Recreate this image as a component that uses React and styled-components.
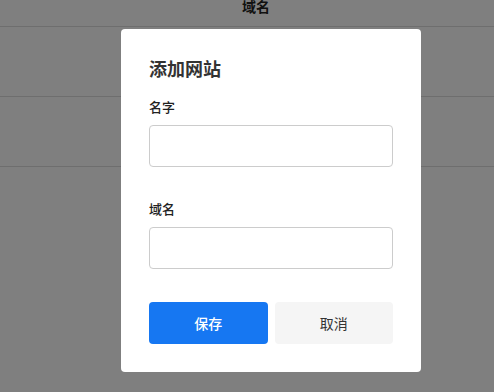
import React from 'react';
import styled, { createGlobalStyle } from 'styled-components';

const GlobalStyle = createGlobalStyle`
  html, body {
    margin: 0;
    padding: 0;
    background: #fff;
    font-family: "Noto Sans CJK SC", "Noto Sans", sans-serif;
    color: #333;
  }
  * {
    box-sizing: border-box;
  }
`;

const Page = styled.div`
  width: 100%;
  height: 392px;
  overflow: hidden;
`;

const Table = styled.div`
  margin-top: -14px;
  display: flex;
  flex-direction: column;
`;

const HeaderRow = styled.div`
  height: 41px;
  display: flex;
  align-items: center;
  justify-content: center;
  padding-left: 18px;
  border-bottom: 1px solid #dcdcdc;
  font-size: 14px;
  font-weight: bold;
  color: #222;
`;

const Row = styled.div`
  height: 70px;
  border-bottom: 1px solid #dcdcdc;
`;

const Overlay = styled.div`
  position: fixed;
  inset: 0;
  background: rgba(0, 0, 0, 0.5);
  display: flex;
  justify-content: center;
  align-items: flex-start;
  padding: 29px 0 0 48px;
`;

const Modal = styled.form`
  width: 300px;
  background: #fff;
  border-radius: 4px;
  padding: 28px;
  display: flex;
  flex-direction: column;
`;

const Title = styled.h2`
  margin: 0 0 19px;
  font-size: 18px;
  line-height: 22px;
  font-weight: bold;
  color: #333;
`;

const Field = styled.div`
  display: flex;
  flex-direction: column;
  gap: 9px;
  margin-bottom: ${(p) => p.$gap || 0}px;
`;

const Label = styled.label`
  font-size: 13px;
  line-height: 18px;
  font-weight: 500;
  color: #222;
`;

const Input = styled.input`
  height: 42px;
  padding: 0 10px;
  font-size: 14px;
  border: 1px solid #ccc;
  border-radius: 4px;
  background: #fff;
  outline: none;
  font-family: inherit;
`;

const Actions = styled.div`
  display: grid;
  grid-template-columns: 1fr 1fr;
  gap: 7px;
`;

const Button = styled.button`
  height: 42px;
  border: none;
  border-radius: 4px;
  font-size: 14px;
  font-family: inherit;
  font-weight: ${(p) => (p.$primary ? 500 : 400)};
  cursor: pointer;
  background: ${(p) => (p.$primary ? '#1677f2' : '#f5f5f5')};
  color: ${(p) => (p.$primary ? '#fff' : '#333')};
`;

const App = () => {
  const rows = [1, 2];

  return (
    <>
      <GlobalStyle />
      <Page>
        <Table>
          <HeaderRow>域名</HeaderRow>
          {rows.map((r) => (
            <Row key={r} />
          ))}
        </Table>
      </Page>

      <Overlay>
        <Modal onSubmit={(e) => e.preventDefault()}>
          <Title>添加网站</Title>

          <Field $gap={33}>
            <Label>名字</Label>
            <Input />
          </Field>

          <Field $gap={33}>
            <Label>域名</Label>
            <Input />
          </Field>

          <Actions>
            <Button type="submit" $primary>保存</Button>
            <Button type="button">取消</Button>
          </Actions>
        </Modal>
      </Overlay>
    </>
  );
};

export default App;
